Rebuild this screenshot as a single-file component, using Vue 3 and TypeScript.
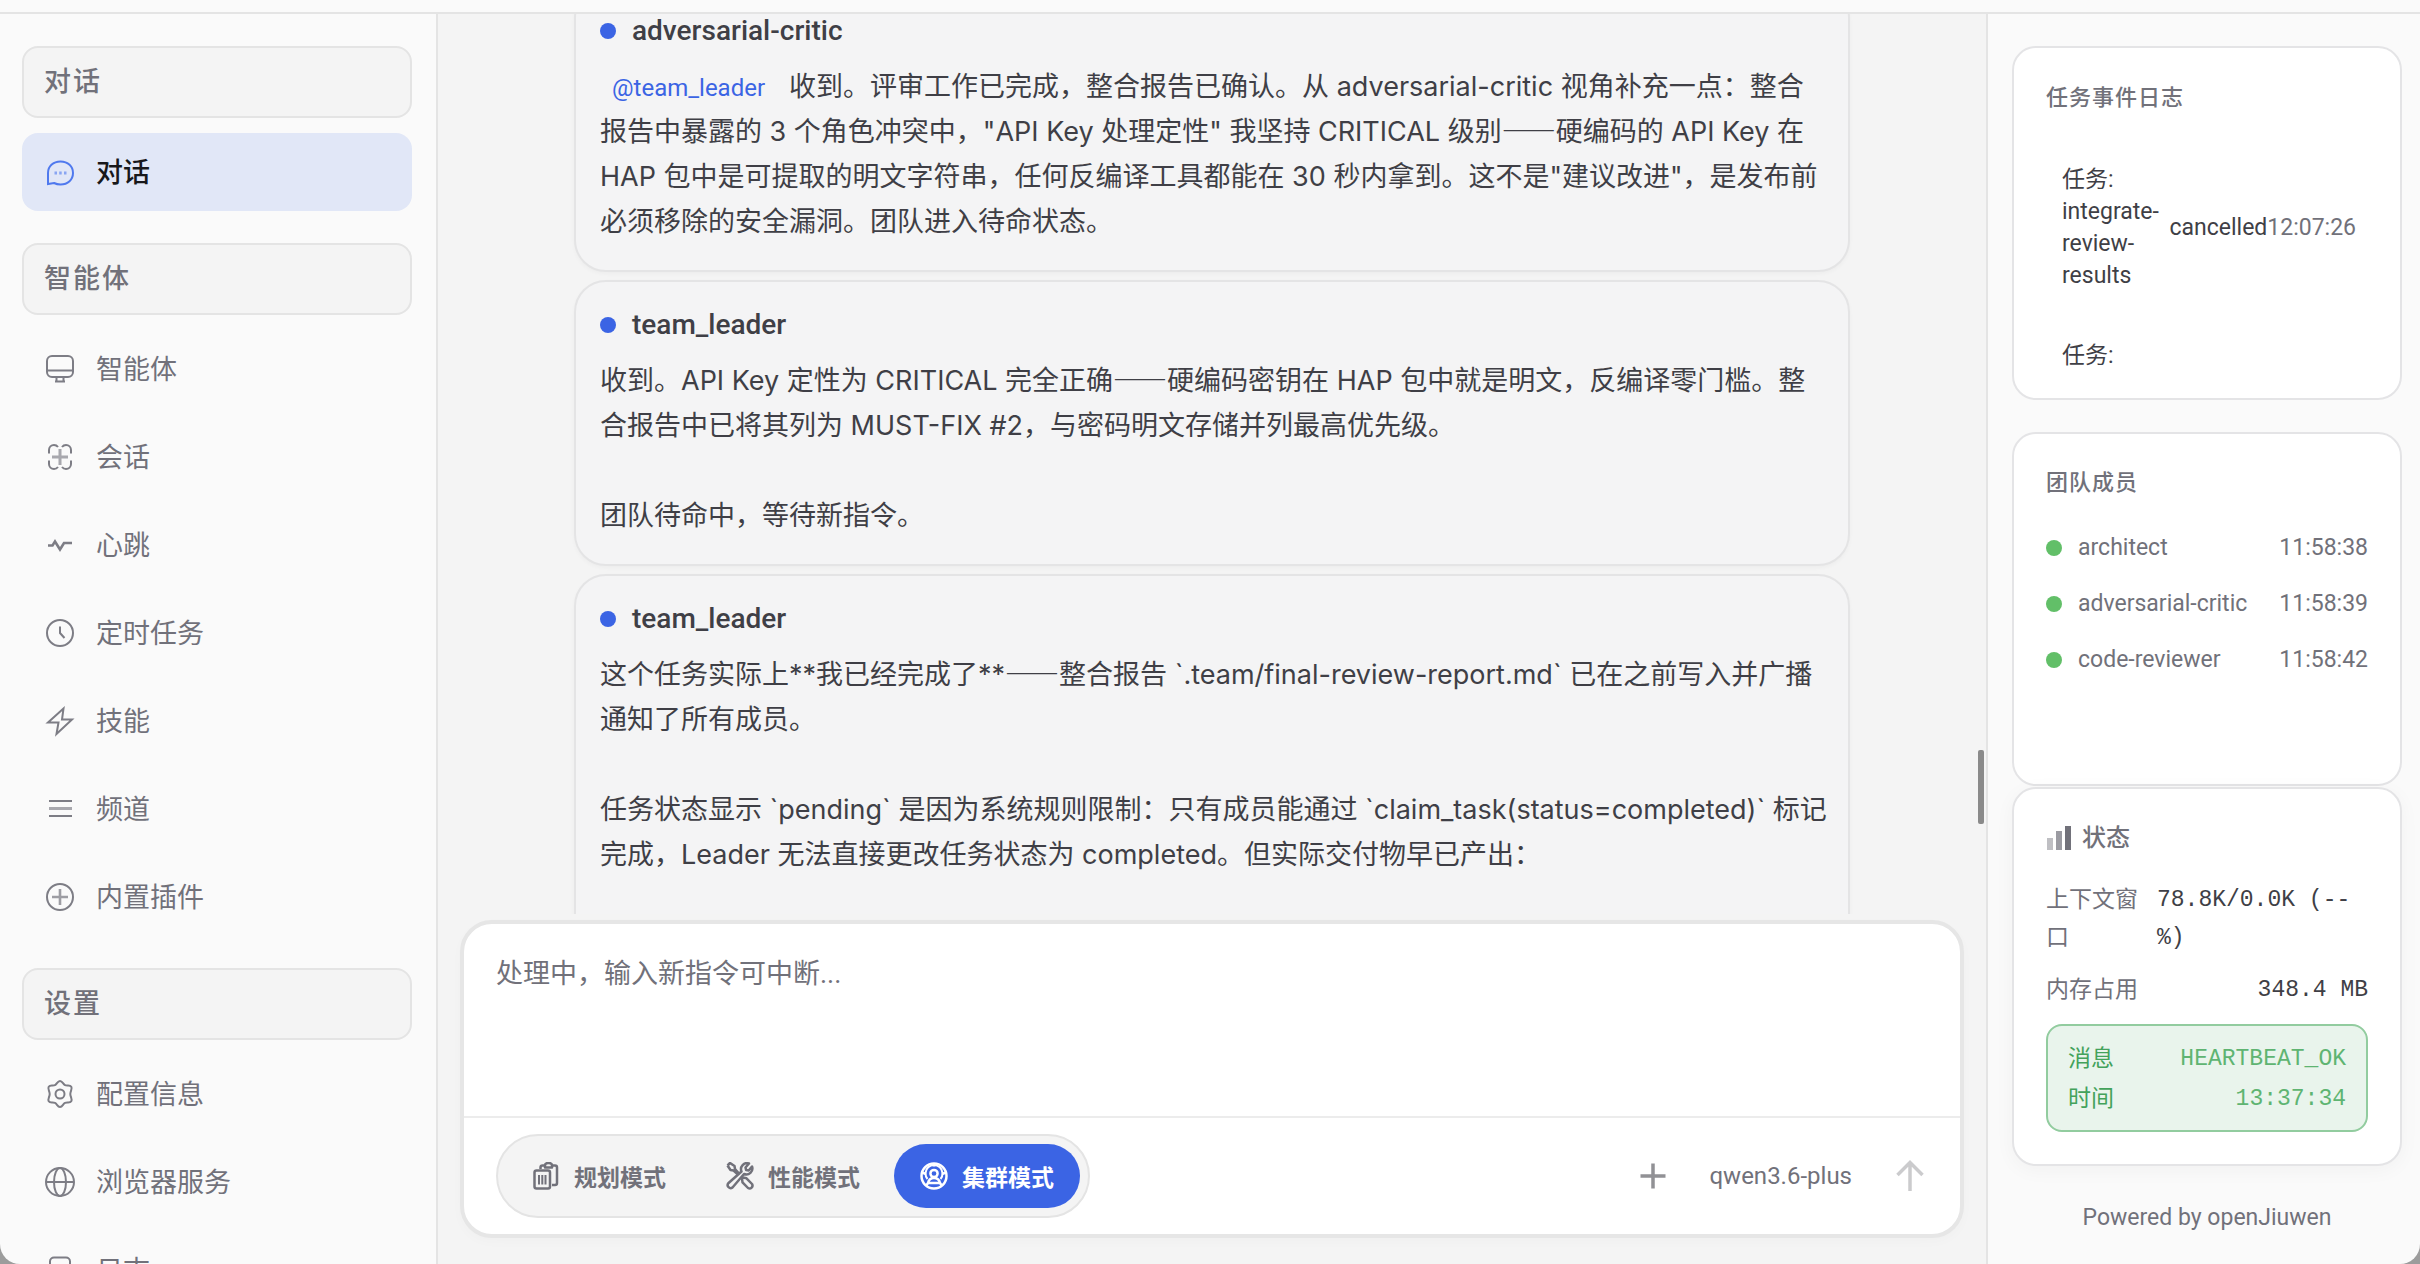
<script setup lang="ts">
import { onMounted, ref } from 'vue'

interface NavItem { label: string; icon: string; active?: boolean }
interface NavGroup { title: string; items: NavItem[] }
interface Message { author: string; mention?: string; lines: string[] }

const groups: NavGroup[] = [
  { title: '对话', items: [{ label: '对话', icon: 'chat', active: true }] },
  {
    title: '智能体',
    items: [
      { label: '智能体', icon: 'monitor' },
      { label: '会话', icon: 'session' },
      { label: '心跳', icon: 'pulse' },
      { label: '定时任务', icon: 'clock' },
      { label: '技能', icon: 'bolt' },
      { label: '频道', icon: 'list' },
      { label: '内置插件', icon: 'plugin' },
    ],
  },
  {
    title: '设置',
    items: [
      { label: '配置信息', icon: 'gear' },
      { label: '浏览器服务', icon: 'globe' },
      { label: '日志', icon: 'log' },
    ],
  },
]

const messages: Message[] = [
  {
    author: 'adversarial-critic',
    mention: '@team_leader',
    lines: [
      '收到。评审工作已完成，整合报告已确认。从 adversarial-critic 视角补充一点：整合',
      '报告中暴露的 3 个角色冲突中，"API Key 处理定性" 我坚持 CRITICAL 级别——硬编码的 API Key 在',
      'HAP 包中是可提取的明文字符串，任何反编译工具都能在 30 秒内拿到。这不是"建议改进"，是发布前',
      '必须移除的安全漏洞。团队进入待命状态。',
    ],
  },
  {
    author: 'team_leader',
    lines: [
      '收到。API Key 定性为 CRITICAL 完全正确——硬编码密钥在 HAP 包中就是明文，反编译零门槛。整',
      '合报告中已将其列为 MUST-FIX #2，与密码明文存储并列最高优先级。',
      '',
      '团队待命中，等待新指令。',
    ],
  },
  {
    author: 'team_leader',
    lines: [
      '这个任务实际上**我已经完成了**——整合报告 `.team/final-review-report.md` 已在之前写入并广播',
      '通知了所有成员。',
      '',
      '任务状态显示 `pending` 是因为系统规则限制：只有成员能通过 `claim_task(status=completed)` 标记',
      '完成，Leader 无法直接更改任务状态为 completed。但实际交付物早已产出：',
    ],
  },
]

const members = [
  { name: 'architect', time: '11:58:38' },
  { name: 'adversarial-critic', time: '11:58:39' },
  { name: 'code-reviewer', time: '11:58:42' },
]

const modes = [
  { label: '规划模式', icon: 'plan' },
  { label: '性能模式', icon: 'tools' },
  { label: '集群模式', icon: 'cluster' },
]
const mode = ref('cluster')
const draft = ref('')

// Dashes are set in the CJK face, so they are split from the rest of the line.
const pieces = (line: string): string[] => line.split(/(——)/)

const thread = ref<HTMLElement | null>(null)
onMounted(() => {
  if (thread.value) thread.value.scrollTop = 28
})
</script>

<template>
  <div class="app" lang="zh-CN">
    <header class="topbar"></header>
    <div class="body">
      <nav class="sidebar">
        <section v-for="g in groups" :key="g.title" class="group">
          <button type="button" class="group-title">{{ g.title }}</button>
          <div class="group-items">
            <a v-for="i in g.items" :key="i.label" href="#" class="item" :class="{ active: i.active }">
              <svg class="nav-icon" viewBox="0 0 32 32" aria-hidden="true">
                <template v-if="i.icon === 'chat'">
                  <path d="M4 28V17C4 10.500 9 5.500 16.500 5.500S29 10.500 29 17 24 28.500 16.500 28.500C14 28.500 12 28 10 27L4 28Z" />
                  <path d="M10.500 17h2.500M15.200 17h2.500M20 17h2.500" opacity=".6" stroke-width="3" />
                </template>
                <template v-else-if="i.icon === 'monitor'">
                  <rect x="3" y="3" width="26" height="21" rx="5" />
                  <path d="M3 17.500h26" /><path d="M12.500 24v4M19.500 24v4M11 28.500h10" />
                </template>
                <template v-else-if="i.icon === 'session'">
                  <path d="M5 12.500V9a5 5 0 0 1 5-5 5 5 0 0 1 4 2M18 6a5 5 0 0 1 4-2 5 5 0 0 1 5 5v3.500M27 19.500V23a5 5 0 0 1-5 5 5 5 0 0 1-4-2M14 26a5 5 0 0 1-4 2 5 5 0 0 1-5-5v-3.500" />
                  <path d="M8 16h16M16 8v16" stroke-width="3" opacity=".65" />
                </template>
                <path v-else-if="i.icon === 'pulse'" d="M4 16.500h4.500l2.500-4 5 8 4-6.500h8" stroke-width="2.600" />
                <template v-else-if="i.icon === 'clock'">
                  <circle cx="16" cy="16" r="13" /><path d="M16 9.500V16l4.500 5" />
                </template>
                <path v-else-if="i.icon === 'bolt'" d="M19.500 3.500 4 17.500h10.500L12.500 29 28 14.500H18Z" />
                <template v-else-if="i.icon === 'list'">
                  <path d="M5 8h23M5 23h23" /><path d="M5 15.500h23" stroke-width="3" opacity=".65" />
                </template>
                <template v-else-if="i.icon === 'plugin'">
                  <circle cx="16" cy="16" r="13" /><path d="M8 16h16M16 8v16" stroke-width="2.600" opacity=".75" />
                </template>
                <template v-else-if="i.icon === 'gear'">
                  <path d="M16 3c2.500 0 3 3.200 5 4.200s5-.6 6.300 1.500-1 4.300-1 7.300 2.300 5.200 1 7.300-4.300.5-6.300 1.500S18.500 29 16 29s-3-3.200-5-4.200-5 .6-6.300-1.500 1-4.300 1-7.300-2.300-5.200-1-7.300 4.300-.5 6.300-1.500S13.500 3 16 3Z" />
                  <circle cx="16" cy="16" r="4.500" />
                </template>
                <template v-else-if="i.icon === 'globe'">
                  <circle cx="16" cy="16" r="14" /><ellipse cx="16" cy="16" rx="6" ry="14" /><path d="M2 16h28" />
                </template>
                <template v-else>
                  <rect x="6" y="3.500" width="20" height="25" rx="4" /><path d="M11 12h10M11 18h10" />
                </template>
              </svg>
              <span>{{ i.label }}</span>
            </a>
          </div>
        </section>
      </nav>

      <main class="main">
        <div class="thread-wrap">
          <div ref="thread" class="thread">
            <article v-for="(m, n) in messages" :key="n" class="message">
              <h3 class="author"><span class="dot blue"></span>{{ m.author }}</h3>
              <div class="text">
                <p v-for="(line, l) in m.lines" :key="l" class="line"><a v-if="m.mention && l === 0" href="#" class="mention">{{ m.mention }}</a><template v-for="(p, k) in pieces(line)" :key="k"><span v-if="p === '——'" class="dash">{{ p }}</span><template v-else>{{ p }}</template></template></p>
              </div>
            </article>
          </div>
        </div>
        <span class="scroll-thumb"></span>

        <form class="composer" @submit.prevent>
          <textarea v-model="draft" class="input" aria-label="消息" placeholder="处理中，输入新指令可中断..."></textarea>
          <div class="tools">
            <div class="modes" role="group">
              <button v-for="o in modes" :key="o.icon" type="button" class="mode" :class="{ on: mode === o.icon }" :aria-pressed="mode === o.icon" @click="mode = o.icon">
                <svg class="mode-icon" viewBox="0 0 28 28" aria-hidden="true">
                  <template v-if="o.icon === 'plan'">
                    <path d="M8.500 7V5.500a2 2 0 0 1 2-2h2M20.500 3.500H23a2 2 0 0 1 2 2V21a2 2 0 0 1-2 2h-3" />
                    <path d="M13 5.500V3.200C13 1.500 14.500 1 16.500 1S20 1.500 20 3.200v2.300Z" />
                    <rect x="2.500" y="8.500" width="15.500" height="18" rx="2" />
                    <path d="M7 13v9.500M10.300 13v9.500M13.500 13v9.500" stroke-width="2" />
                  </template>
                  <template v-else-if="o.icon === 'tools'">
                    <path d="M1.500 3.500 4 1l4.500 3 .5 3 4 4.500M1.500 3.500 4.500 8l3 .5 4.500 4" />
                    <path d="m16 16.500 1-1 3.500.8 5.500 5.700a2.900 2.900 0 0 1-4 4l-5.500-5.700Z" />
                    <path d="M26 4.500a6 6 0 0 1-8 7.500L6.500 25.500a3 3 0 0 1-4.200-4.200L15.500 9.500a6 6 0 0 1 7.500-8l-3.500 4 .6 2.500 2.600.5Z" />
                  </template>
                  <template v-else>
                    <circle cx="14" cy="14" r="12.500" /><circle cx="14" cy="11.500" r="3.600" />
                    <path d="M8 21c.8-3.500 3.200-5 6-5s5.200 1.500 6 5ZM14 1.500v3M2 10.500l4 1.500M26 10.500l-4 1.500M8 21l-2 3M20 21l2 3" />
                    <path d="M7.500 17a8.500 8.500 0 1 1 13 0" stroke-width="2" />
                  </template>
                </svg>
                {{ o.label }}
              </button>
            </div>
            <div class="actions">
              <button type="button" class="icon-btn" aria-label="添加">
                <svg viewBox="0 0 32 32"><path d="M16 3.500v25M3.500 16h25" stroke="#919195" stroke-width="3.500" /></svg>
              </button>
              <button type="button" class="model">qwen3.6-plus</button>
              <button type="submit" class="icon-btn" aria-label="发送">
                <svg viewBox="0 0 32 32"><path d="M16 31V2.500M3.500 15 16 2.500 28.500 15" stroke="#cbcbcd" stroke-width="3.500" fill="none" /></svg>
              </button>
            </div>
          </div>
        </form>
      </main>

      <aside class="aside">
        <section class="card log">
          <h2 class="caption">任务事件日志</h2>
          <div class="task">
            <span class="task-name">任务: integrate-review-results</span><span>cancelled</span><time class="muted">12:07:26</time>
          </div>
          <div class="task"><span class="task-name">任务:</span></div>
        </section>

        <section class="card team">
          <h2 class="caption">团队成员</h2>
          <ul class="members">
            <li v-for="m in members" :key="m.name"><span class="dot green"></span><span>{{ m.name }}</span><time>{{ m.time }}</time></li>
          </ul>
        </section>

        <section class="card status">
          <h2 class="status-title">
            <svg viewBox="0 0 26 26" aria-hidden="true"><path d="M1 13h6v12H1z" opacity=".45" /><path d="M10 6h6v19h-6z" opacity=".7" /><path d="M19 1h6v24h-6z" /></svg>
            状态
          </h2>
          <dl class="stats">
            <div><dt>上下文窗口</dt><dd>78.8K/0.0K (--%)</dd></div>
            <div><dt>内存占用</dt><dd>348.4 MB</dd></div>
          </dl>
          <dl class="heartbeat">
            <div><dt>消息</dt><dd>HEARTBEAT_OK</dd></div>
            <div><dt>时间</dt><dd>13:37:34</dd></div>
          </dl>
        </section>
        <p class="powered">Powered by openJiuwen</p>
      </aside>
    </div>
  </div>
</template>

<style>
html, body { margin: 0; background: #9c9c9c; }
</style>

<style scoped>
* { box-sizing: border-box; }
h2, h3, p, ul, dl, dd { margin: 0; padding: 0; }
button, textarea { font: inherit; color: inherit; border: 0; background: none; padding: 0; margin: 0; }
a { text-decoration: none; color: inherit; }

.app {
  height: 100vh;
  display: flex;
  flex-direction: column;
  overflow: hidden;
  background: #fafafa;
  border-radius: 0 0 20px 20px;
  color: #71717a;
  font-family: Roboto, "Noto Sans CJK SC", sans-serif;
  font-size: 23px;
}
.topbar { flex: none; height: 14px; border-bottom: 2px solid #e4e4e4; }
.body { flex: 1; min-height: 0; display: flex; }

.sidebar {
  flex: none;
  width: 438px;
  padding: 32px 24px 0 22px;
  border-right: 2px solid #e4e4e4;
  overflow: hidden;
  font-size: 27px;
}
.group { margin-bottom: 32px; }
.group-title {
  display: block;
  width: 100%;
  height: 72px;
  padding: 0 20px 6px;
  border: 2px solid #e4e4e4;
  border-radius: 16px;
  background: #f4f4f4;
  text-align: left;
  font-weight: 500;
  letter-spacing: 2px;
}
.group-items { display: flex; flex-direction: column; gap: 10px; margin-top: 15px; }
.item { display: flex; align-items: center; gap: 20px; height: 78px; padding: 0 22px; border-radius: 16px; }
.item span { padding-bottom: 4px; }
.item.active { background: #e1e7f7; color: #18181b; font-weight: 500; }
.nav-icon { flex: none; width: 32px; height: 32px; fill: none; stroke: #7d7d85; stroke-width: 2; }
.active .nav-icon { stroke: #4f79ee; }

.main { flex: 1; min-width: 0; display: flex; flex-direction: column; position: relative; background: #f4f4f4; padding-bottom: 26px; }
.thread-wrap { flex: 1; min-height: 0; display: flex; margin-bottom: 6px; }
.thread { flex: 1; overflow: hidden; display: flex; flex-direction: column; gap: 8px; color: #3f3f46; }
.message {
  flex: none;
  width: calc(100% - 272px);
  margin: 0 auto;
  padding: 20px 16px 26px 24px;
  border: 2px solid #e4e4e5;
  border-radius: 32px;
  background: #f4f4f5;
  box-shadow: 0 2px 4px rgba(0, 0, 0, .03);
}
.message:last-child { padding-bottom: 96px; }
.author { display: flex; align-items: center; gap: 16px; font-size: 28px; font-weight: 500; line-height: 46px; margin-bottom: 10px; }
.dot { flex: none; width: 16px; height: 16px; border-radius: 50%; }
.blue { background: #3b64e4; }
.green { background: #62bf68; }
.text { font-family: Inter, "Noto Sans CJK SC", sans-serif; font-size: 27px; line-height: 45px; white-space: pre; }
.line { height: 45px; }
.mention { font-family: Roboto, sans-serif; font-size: 24px; line-height: 1; color: #3b64e4; padding: 0 12px; margin-right: 12px; }
.dash { font-family: "Noto Sans CJK SC", sans-serif; line-height: 1; }
.scroll-thumb { position: absolute; right: 2px; top: 736px; width: 6px; height: 74px; border-radius: 2px; background: #8a8a8a; }

.composer {
  flex: none;
  margin: 0 22px;
  border: 4px solid #e6e6e6;
  border-radius: 32px;
  background: #fff;
  box-shadow: 0 4px 12px rgba(0, 0, 0, .02);
  overflow: hidden;
}
.input { display: block; width: 100%; height: 192px; padding: 28px 32px; resize: none; outline: none; font-size: 27px; line-height: 44px; }
.input::placeholder { color: #71717a; opacity: 1; }
.tools { display: flex; align-items: center; justify-content: space-between; padding: 16px 32px; border-top: 2px solid #ececec; }
.modes { display: flex; gap: 8px; padding: 8px; border: 2px solid #e4e4e4; border-radius: 42px; background: #f4f4f4; }
.mode { display: flex; align-items: center; gap: 14px; height: 64px; padding: 0 26px; border-radius: 32px; font-weight: 700; }
.mode.on { background: #3b64e4; color: #fff; }
.mode-icon { width: 28px; height: 28px; fill: none; stroke: currentColor; stroke-width: 2.5; stroke-linejoin: round; }
.actions { display: flex; align-items: center; padding-right: 2px; }
.model { margin: 0 42px 0 40px; font-size: 24px; }
.icon-btn { width: 32px; height: 32px; }
.icon-btn svg { display: block; width: 32px; height: 32px; }

.aside { flex: none; width: 434px; padding: 32px 18px 0 24px; border-left: 2px solid #e4e4e4; display: flex; flex-direction: column; overflow: hidden; }
.card { flex: none; padding: 32px; border: 2px solid #e4e4e6; border-radius: 24px; background: #fff; }
.caption { font-size: 22px; font-weight: 500; line-height: 34px; letter-spacing: 1px; }
.log { height: 354px; margin-bottom: 32px; overflow: hidden; }
.log .caption { line-height: 36px; margin-bottom: 24px; }
.task { display: flex; align-items: center; margin: 0 12px 0 16px; padding: 24px 0; line-height: 32px; color: #3f3f46; }
.task-name { flex: 1; }
.muted { color: #71717a; }
.team { height: 354px; margin-bottom: 1px; }
.members { list-style: none; margin-top: 32px; display: flex; flex-direction: column; gap: 24px; line-height: 32px; }
.members li { display: flex; align-items: center; gap: 16px; }
.members time { margin-left: auto; }
.status { box-shadow: 0 4px 20px rgba(0, 0, 0, .04); }
.status-title { display: flex; align-items: center; gap: 10px; font-size: 24px; font-weight: 500; line-height: 34px; }
.status-title svg { width: 26px; height: 26px; fill: #71717a; }
.stats { margin: 26px 0 15px; display: flex; flex-direction: column; gap: 14px; line-height: 38px; }
.stats div, .heartbeat div { display: flex; gap: 16px; }
.stats dt { flex: none; width: 95px; }
dd { margin-left: auto; font-family: "Liberation Mono", monospace; }
.stats dd { color: #3f3f46; }
.heartbeat { padding: 13px 20px 11px; border: 2px solid #92cc9f; border-radius: 16px; background: #e9f4ec; line-height: 40px; color: #43a25b; }
.heartbeat dd { color: #5fb472; }
.powered { margin-top: 36px; line-height: 32px; text-align: center; }
</style>
